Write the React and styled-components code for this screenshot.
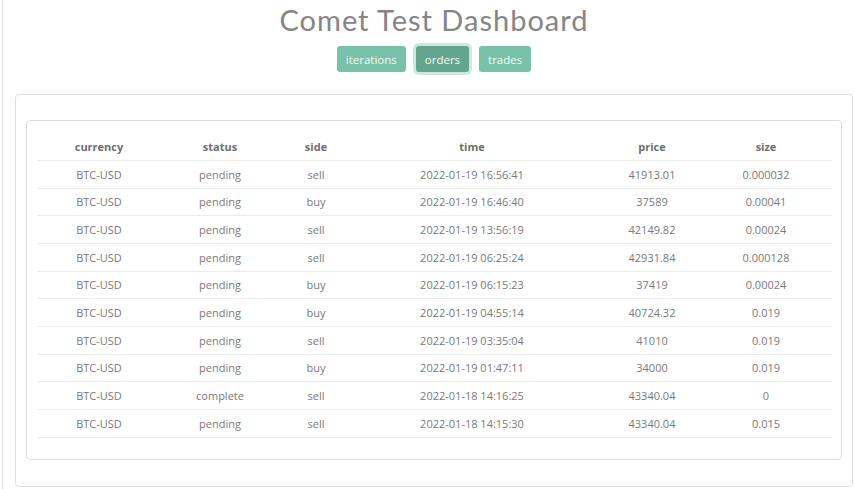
import React from "react";
import styled, { createGlobalStyle } from "styled-components";

const GlobalStyle = createGlobalStyle`
  html, body {
    margin: 0;
    padding: 0;
    background: #ffffff;
  }
  body {
    font-family: "Open Sans", "Noto Sans", sans-serif;
  }
`;

const orders = [
  ["BTC-USD", "pending", "sell", "2022-01-19 16:56:41", "41913.01", "0.000032"],
  ["BTC-USD", "pending", "buy", "2022-01-19 16:46:40", "37589", "0.00041"],
  ["BTC-USD", "pending", "sell", "2022-01-19 13:56:19", "42149.82", "0.00024"],
  ["BTC-USD", "pending", "sell", "2022-01-19 06:25:24", "42931.84", "0.000128"],
  ["BTC-USD", "pending", "buy", "2022-01-19 06:15:23", "37419", "0.00024"],
  ["BTC-USD", "pending", "buy", "2022-01-19 04:55:14", "40724.32", "0.019"],
  ["BTC-USD", "pending", "sell", "2022-01-19 03:35:04", "41010", "0.019"],
  ["BTC-USD", "pending", "buy", "2022-01-19 01:47:11", "34000", "0.019"],
  ["BTC-USD", "complete", "sell", "2022-01-18 14:16:25", "43340.04", "0"],
  ["BTC-USD", "pending", "sell", "2022-01-18 14:15:30", "43340.04", "0.015"],
];

const columns = [
  { label: "currency", width: 122 },
  { label: "status", width: 120 },
  { label: "side", width: 72 },
  { label: "time", width: 240 },
  { label: "price", width: 120 },
  { label: "size", width: 120 },
];

const tabs = ["iterations", "orders", "trades"];

function App() {
  return (
    <>
      <GlobalStyle />
      <Page>
        <Header>
          <Title>Comet Test Dashboard</Title>
          <Tabs>
            {tabs.map((t) => (
              <TabButton key={t} $active={t === "orders"}>
                {t}
              </TabButton>
            ))}
          </Tabs>
        </Header>
        <OuterCard>
          <InnerCard>
            <Table>
              <colgroup>
                {columns.map((c) => (
                  <col key={c.label} style={{ width: c.width }} />
                ))}
              </colgroup>
              <thead>
                <tr>
                  {columns.map((c) => (
                    <Th key={c.label}>{c.label}</Th>
                  ))}
                </tr>
              </thead>
              <tbody>
                {orders.map((row, i) => (
                  <tr key={i}>
                    {row.map((cell, j) => (
                      <Td key={j}>{cell}</Td>
                    ))}
                  </tr>
                ))}
              </tbody>
            </Table>
          </InnerCard>
        </OuterCard>
      </Page>
    </>
  );
}

const Page = styled.div`
  margin-left: 2px;
  width: 851px;
  min-height: 489px;
  box-sizing: border-box;
  border-left: 1px solid #e2e2e2;
  padding-left: 12px;
`;

const Header = styled.div`
  display: flex;
  flex-direction: column;
  align-items: center;
  padding-top: 2px;
`;

const Title = styled.h1`
  margin: 0;
  font-family: "Lato", "Open Sans", sans-serif;
  font-weight: 400;
  font-size: 29px;
  letter-spacing: 1px;
  color: #858585;
  line-height: 36px;
`;

const Tabs = styled.div`
  display: flex;
  gap: 10px;
  margin-top: 8px;
`;

const TabButton = styled.button`
  height: 26px;
  padding: 0 9px;
  border: none;
  border-radius: 3px;
  font-family: "Open Sans", sans-serif;
  font-size: 11.5px;
  color: #f4faf7;
  background: ${(p) => (p.$active ? "#64a58f" : "#77c2a9")};
  box-shadow: ${(p) => (p.$active ? "0 0 0 3px #cfe8df" : "none")};
  cursor: pointer;
`;

const OuterCard = styled.div`
  margin-top: 22px;
  border: 1px solid #e0e0e0;
  border-radius: 4px;
  padding: 25px 10px 26px 10px;
`;

const InnerCard = styled.div`
  border: 1px solid #dedede;
  border-radius: 4px;
  padding: 11px 11px 21px 11px;
`;

const Table = styled.table`
  width: 100%;
  border-collapse: collapse;
  table-layout: fixed;
  font-size: 11px;
`;

const Th = styled.th`
  height: 28px;
  text-align: center;
  font-weight: 700;
  color: #6e6e6e;
  border-bottom: 1px solid #ececec;
  padding: 0;

  &:last-child {
    padding-right: 12px;
  }
`;

const Td = styled.td`
  height: 26.67px;
  text-align: center;
  color: #7a7a7a;
  border-bottom: 1px solid #ececec;
  padding: 0;

  &:last-child {
    padding-right: 12px;
  }
`;

export default App;
